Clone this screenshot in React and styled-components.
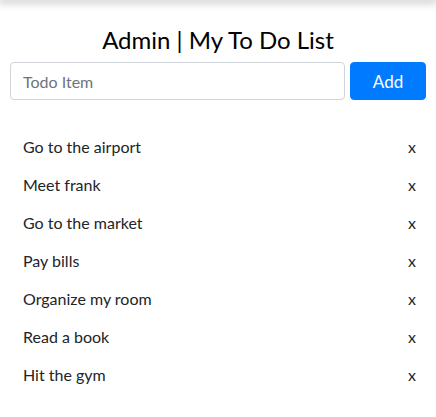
import styled, { createGlobalStyle } from "styled-components";

const TODOS = [
  "Go to the airport",
  "Meet frank",
  "Go to the market",
  "Pay bills",
  "Organize my room",
  "Read a book",
  "Hit the gym",
];

const GlobalStyle = createGlobalStyle`
  * { box-sizing: border-box; }
  body {
    margin: 0;
    background: #fff;
    color: #212529;
    font-family: Lato, "Liberation Sans", sans-serif;
    font-size: 16px;
  }
`;

export default function App() {
  return (
    <>
      <GlobalStyle />
      <TopShadow />
      <Page>
        <Title>Admin | My To Do List</Title>
        <Form>
          <TodoInput placeholder="Todo Item" />
          <AddButton>Add</AddButton>
        </Form>
        <List>
          {TODOS.map((todo) => (
            <Item key={todo}>
              <span>{todo}</span>
              <Remove>x</Remove>
            </Item>
          ))}
        </List>
      </Page>
    </>
  );
}

const TopShadow = styled.div`
  height: 1px;
  margin-top: -1px;
  box-shadow: 0 0 10px 2px rgba(0, 0, 0, 0.3);
`;

const Page = styled.div`
  padding: 26px 10px 0;
`;

const Title = styled.h1`
  margin: 0 0 8px;
  text-align: center;
  font-size: 24px;
  font-weight: 400;
  line-height: 28px;
  color: #000;
`;

const Form = styled.div`
  display: flex;
  gap: 5px;
`;

const TodoInput = styled.input`
  flex: 1;
  height: 38px;
  padding: 6px 12px;
  border: 1px solid #ced4da;
  border-radius: 4px;
  font: inherit;
  color: #495057;
  outline: none;

  &::placeholder {
    color: #6c757d;
  }
`;

const AddButton = styled.button`
  width: 76px;
  height: 38px;
  border: 1px solid #007bff;
  border-radius: 4px;
  background: #007bff;
  color: #fff;
  font: inherit;
  font-size: 17px;
`;

const List = styled.ul`
  list-style: none;
  margin: 27px 0 0;
  padding: 0;
`;

const Item = styled.li`
  display: flex;
  justify-content: space-between;
  align-items: center;
  height: 38px;
  padding: 0 10px 0 13px;
`;

const Remove = styled.span`
  cursor: pointer;
`;
